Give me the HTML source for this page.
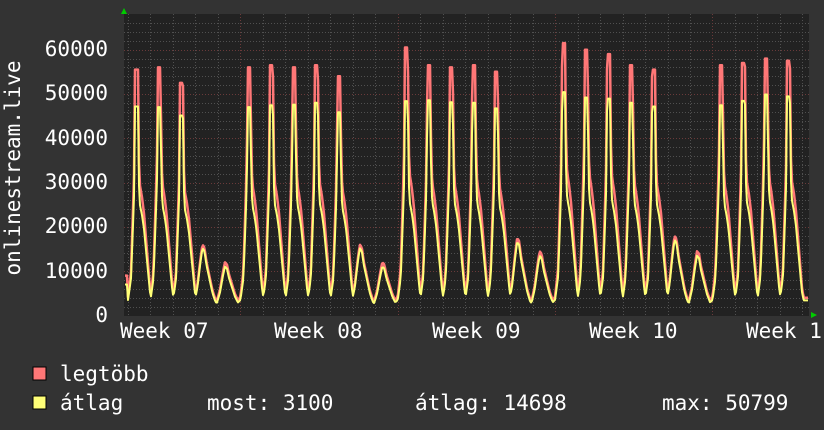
<!DOCTYPE html>
<html><head><meta charset="utf-8"><style>
html,body{margin:0;padding:0;background:#333;}
body{width:824px;height:430px;overflow:hidden;position:relative;font-family:"DejaVu Sans Mono","Liberation Mono",monospace;color:#fff;}
svg{position:absolute;left:0;top:0}
</style></head><body>
<svg id="g" width="824" height="430" xmlns="http://www.w3.org/2000/svg" font-family="DejaVu Sans Mono, Liberation Mono, monospace" font-size="21" fill="#fff">
<rect x="124" y="14" width="685" height="302" fill="#222"/>
<g id="grid"></g>
<g id="data"></g>
<polygon points="121,14 127,14 124,8" fill="#0c0"/>
<polygon points="811,312 811,318 817,315" fill="#0c0"/>
<g text-anchor="end">
<text x="108" y="56">60000</text>
<text x="108" y="100">50000</text>
<text x="108" y="145">40000</text>
<text x="108" y="189">30000</text>
<text x="108" y="233">20000</text>
<text x="108" y="278">10000</text>
<text x="108" y="322">0</text>
</g>
<text x="120" y="338">Week 07</text>
<text x="274" y="338">Week 08</text>
<text x="432" y="338">Week 09</text>
<text x="589" y="338">Week 10</text>
<text x="746" y="338">Week 1</text>
<text transform="translate(20,168) rotate(-90)" text-anchor="middle">onlinestream.live</text>
<rect x="33" y="367" width="13" height="13" fill="#f77" stroke="#000" stroke-width="1"/>
<rect x="33" y="396" width="13" height="13" fill="#ff7" stroke="#000" stroke-width="1"/>
<text x="60" y="381">legtöbb</text>
<text x="60" y="410">átlag</text>
<text x="207" y="410">most: 3100</text>
<text x="415" y="410">átlag: 14698</text>
<text x="662" y="410">max: 50799</text>
</svg>
<script>
(function(){
var ns="http://www.w3.org/2000/svg",grid=document.getElementById("grid"),data=document.getElementById("data");
function line(x1,y1,x2,y2,c,d){var l=document.createElementNS(ns,"line");l.setAttribute("x1",x1);l.setAttribute("y1",y1);l.setAttribute("x2",x2);l.setAttribute("y2",y2);l.setAttribute("stroke",c);l.setAttribute("stroke-width",1);if(d)l.setAttribute("stroke-dasharray",d);grid.appendChild(l);}
var y0=315.5,k=44.3/10000;
for(var v=2000;v<=66000;v+=2000){var y=Math.round(y0-v*k)+0.5;if(y<14)break;line(124,y,809,y,v%10000==0?"#6a3a3a":"#505050","1,2");}
var dx=22.48;
for(var i=0;i<31;i++){var x=Math.round(128+i*dx)+0.5;if(x>809)break;var maj=(Math.abs(x-240.5)<3||Math.abs(x-397.5)<3||Math.abs(x-555.5)<3||Math.abs(x-712.5)<3);line(x,14,x,316,maj?"#6a3a3a":"#505050","1,2");}
var peaks=[55.5,56,52.5,16,12,56,56.5,56,56.5,54,16,12,60.5,56.5,56,56.5,55,17.5,14.5,61.5,60,59,56.5,55.5,18,14.5,56.5,57,58,57.5];
var avgf=[0.85,0.84,0.86,0.95,0.92,0.84,0.84,0.85,0.85,0.85,0.95,0.92,0.8,0.86,0.86,0.85,0.85,0.95,0.93,0.82,0.82,0.83,0.85,0.85,0.95,0.93,0.84,0.85,0.86,0.86];
var wd=[[-12,0],[-8,0.02],[-5,0.13],[-3,0.4],[-1.5,0.62],[-1,1],[2,1],[3,0.6],[4,0.5],[6,0.45],[8,0.38],[11,0.22],[14,0.06],[16,0.01],[18,0]];
var we=[[-12,0],[-9,0.03],[-6,0.3],[-3,0.75],[-1,1],[1,0.95],[3,0.7],[6,0.45],[9,0.2],[12,0.04],[14,0]];
function interp(tab,u){if(u<=tab[0][0]||u>=tab[tab.length-1][0])return 0;for(var i=1;i<tab.length;i++){if(u<=tab[i][0]){var a=tab[i-1],b=tab[i];return a[1]+(b[1]-a[1])*(u-a[0])/(b[0]-a[0]);}}return 0;}
function val(x,avg){var b=avg?2.6:3.1;var m=0;for(var d=0;d<peaks.length;d++){var px=136+d*dx;var u=x-px;if(u<-13||u>19)continue;var pk=peaks[d]*(avg?avgf[d]:1);var s=interp(pk<20?we:wd,u);m=Math.max(m,(pk-b)*s);}var r=b+m;if(x>800)r=Math.max(r,avg?3.4:4);if(x<128)r=Math.max(r,avg?7:9);return r;}
function path(avg,col,w){var s="";for(var x=125;x<=808;x+=1){var y=y0-val(x,avg)*1000*k;s+=(x==125?"M":"L")+x+","+y.toFixed(1);}var p=document.createElementNS(ns,"path");p.setAttribute("d",s);p.setAttribute("fill","none");p.setAttribute("stroke",col);p.setAttribute("stroke-width",w);p.setAttribute("stroke-linejoin","round");data.appendChild(p);}
path(false,"#f77",2.5);path(true,"#ff7",2);
})();
</script>
</body></html>
